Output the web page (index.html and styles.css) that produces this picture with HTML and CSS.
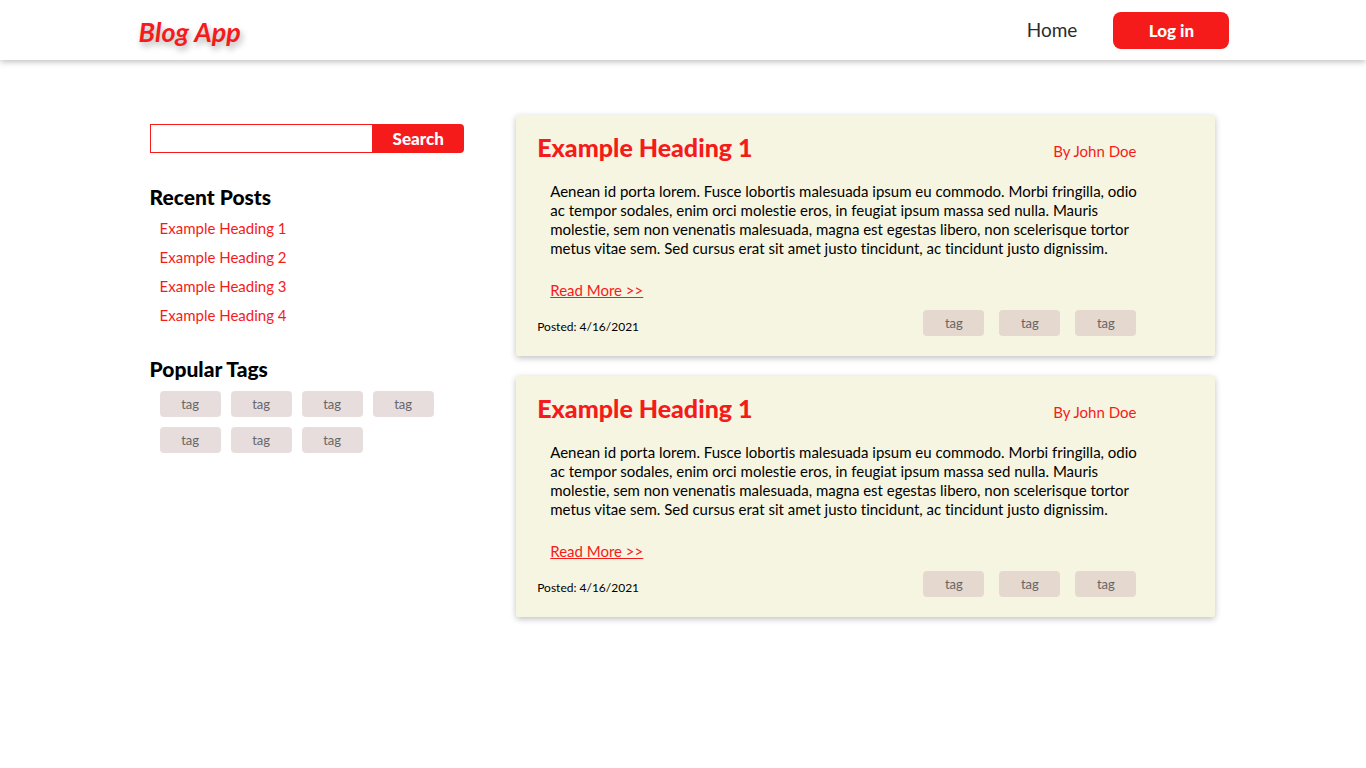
FILE: index.html
```html
<!DOCTYPE html>
<html lang="en">
<head>
<meta charset="utf-8">
<meta name="viewport" content="width=device-width, initial-scale=1">
<title>Blog App</title>
<link rel="stylesheet" href="styles.css">
</head>
<body>
<header class="navbar">
  <a class="logo" href="#">Blog App</a>
  <nav class="nav">
    <a class="nav-link" href="#">Home</a>
    <button class="login" type="button">Log in</button>
  </nav>
</header>
<main class="page">
  <aside class="sidebar">
    <form class="search">
      <input class="search-input" type="text" aria-label="Search posts">
      <button class="search-button" type="button">Search</button>
    </form>
    <section class="recent">
      <h2 class="side-title">Recent Posts</h2>
      <ul class="recent-list">
        <li><a href="#">Example Heading 1</a></li>
        <li><a href="#">Example Heading 2</a></li>
        <li><a href="#">Example Heading 3</a></li>
        <li><a href="#">Example Heading 4</a></li>
      </ul>
    </section>
    <section class="popular">
      <h2 class="side-title">Popular Tags</h2>
      <div class="tags">
        <button class="tag" type="button">tag</button>
        <button class="tag" type="button">tag</button>
        <button class="tag" type="button">tag</button>
        <button class="tag" type="button">tag</button>
        <button class="tag" type="button">tag</button>
        <button class="tag" type="button">tag</button>
        <button class="tag" type="button">tag</button>
      </div>
    </section>
  </aside>
  <div class="posts">
    <article class="post">
      <div class="post-head">
        <h1 class="post-title">Example Heading 1</h1>
        <span class="author">By John Doe</span>
      </div>
      <div class="post-body">
        <p class="post-text">Aenean id porta lorem. Fusce lobortis malesuada ipsum eu commodo. Morbi fringilla, odio ac tempor sodales, enim orci molestie eros, in feugiat ipsum massa sed nulla. Mauris molestie, sem non venenatis malesuada, magna est egestas libero, non scelerisque tortor metus vitae sem. Sed cursus erat sit amet justo tincidunt, ac tincidunt justo dignissim.</p>
        <a class="read-more" href="#">Read More &gt;&gt;</a>
      </div>
      <div class="post-foot">
        <span class="date">Posted: 4/16/2021</span>
        <div class="post-tags">
          <button class="tag" type="button">tag</button>
          <button class="tag" type="button">tag</button>
          <button class="tag" type="button">tag</button>
        </div>
      </div>
    </article>
    <article class="post">
      <div class="post-head">
        <h1 class="post-title">Example Heading 1</h1>
        <span class="author">By John Doe</span>
      </div>
      <div class="post-body">
        <p class="post-text">Aenean id porta lorem. Fusce lobortis malesuada ipsum eu commodo. Morbi fringilla, odio ac tempor sodales, enim orci molestie eros, in feugiat ipsum massa sed nulla. Mauris molestie, sem non venenatis malesuada, magna est egestas libero, non scelerisque tortor metus vitae sem. Sed cursus erat sit amet justo tincidunt, ac tincidunt justo dignissim.</p>
        <a class="read-more" href="#">Read More &gt;&gt;</a>
      </div>
      <div class="post-foot">
        <span class="date">Posted: 4/16/2021</span>
        <div class="post-tags">
          <button class="tag" type="button">tag</button>
          <button class="tag" type="button">tag</button>
          <button class="tag" type="button">tag</button>
        </div>
      </div>
    </article>
  </div>
</main>
</body>
</html>
```
FILE: styles.css
```css
* {
  box-sizing: border-box;
  margin: 0;
  padding: 0;
}

body {
  background: #fff;
  color: #000;
  font-family: "Gill Sans MT", Lato, sans-serif;
  font-size: 15px;
  font-variant-ligatures: none;
  line-height: 19px;
}

a {
  color: #f51b1b;
  text-decoration: none;
}

button {
  border: 0;
  font-family: inherit;
  cursor: pointer;
}

.navbar {
  display: flex;
  align-items: center;
  justify-content: space-between;
  height: 60px;
  padding: 0 10%;
  box-shadow: 0 2px 6px rgba(0, 0, 0, 0.25);
}

.logo {
  padding: 4px 0 0 2px;
  font-family: "Harlow Solid Italic", Lato, cursive;
  font-size: 27px;
  font-style: italic;
  font-weight: 700;
  line-height: 28px;
  text-shadow: 2px 4px 6px rgba(0, 0, 0, 0.3);
}

.nav {
  display: flex;
  align-items: center;
  gap: 36px;
}

.nav-link {
  color: #2b2b2b;
  font-size: 19px;
  line-height: 24px;
}

.login {
  width: 116px;
  height: 37px;
  border-radius: 8px;
  background: #f51b1b;
  color: #fff;
  font-size: 17px;
  font-weight: 900;
}

.page {
  display: grid;
  grid-template-columns: 9fr 20fr;
  gap: 52px;
  align-items: start;
  margin: 0 10%;
  padding: 55px 14px 20px 13px;
}

.sidebar {
  padding-top: 9px;
}

.search {
  display: flex;
  height: 29px;
}

.search-input {
  flex: 1;
  min-width: 0;
  padding: 0 8px;
  border: 1px solid #f51b1b;
  border-right: 0;
  font: inherit;
}

.search-button {
  width: 92px;
  border-radius: 0 4px 4px 0;
  background: #f51b1b;
  color: #fff;
  font-size: 17px;
  font-weight: 900;
}

.side-title {
  font-size: 21px;
  font-weight: 900;
  line-height: 24px;
}

.recent {
  margin-top: 32px;
}

.recent-list {
  display: grid;
  gap: 10px;
  padding: 10px 0 0 10px;
  list-style: none;
}

.popular {
  margin-top: 32px;
}

.tags {
  display: flex;
  flex-wrap: wrap;
  gap: 10px;
  padding: 10px 0 0 10px;
}

.tag {
  width: 61px;
  height: 26px;
  border-radius: 4px;
  background: rgba(212, 191, 191, 0.53);
  color: #666;
  font-size: 13px;
}

.posts {
  display: grid;
  gap: 20px;
}

.post {
  padding: 18px 79px 20px 21px;
  border-radius: 2px;
  background: #f6f5e1;
  box-shadow: 0 2px 6px rgba(0, 0, 0, 0.25);
}

.post-head {
  display: flex;
  align-items: flex-end;
  justify-content: space-between;
}

.post-title {
  color: #f51b1b;
  font-size: 25px;
  font-weight: 900;
  line-height: 28px;
}

.author {
  color: #f51b1b;
}

.post-body {
  padding: 21px 0 0 13px;
}

.post-text {
  margin: 0 -8px 23px 0;
}

.post-foot {
  display: flex;
  align-items: flex-end;
  justify-content: space-between;
  padding-top: 10px;
}

.date {
  font-size: 12px;
}

.post-tags {
  display: flex;
  gap: 15px;
}

.read-more {
  text-decoration: underline;
}
```
